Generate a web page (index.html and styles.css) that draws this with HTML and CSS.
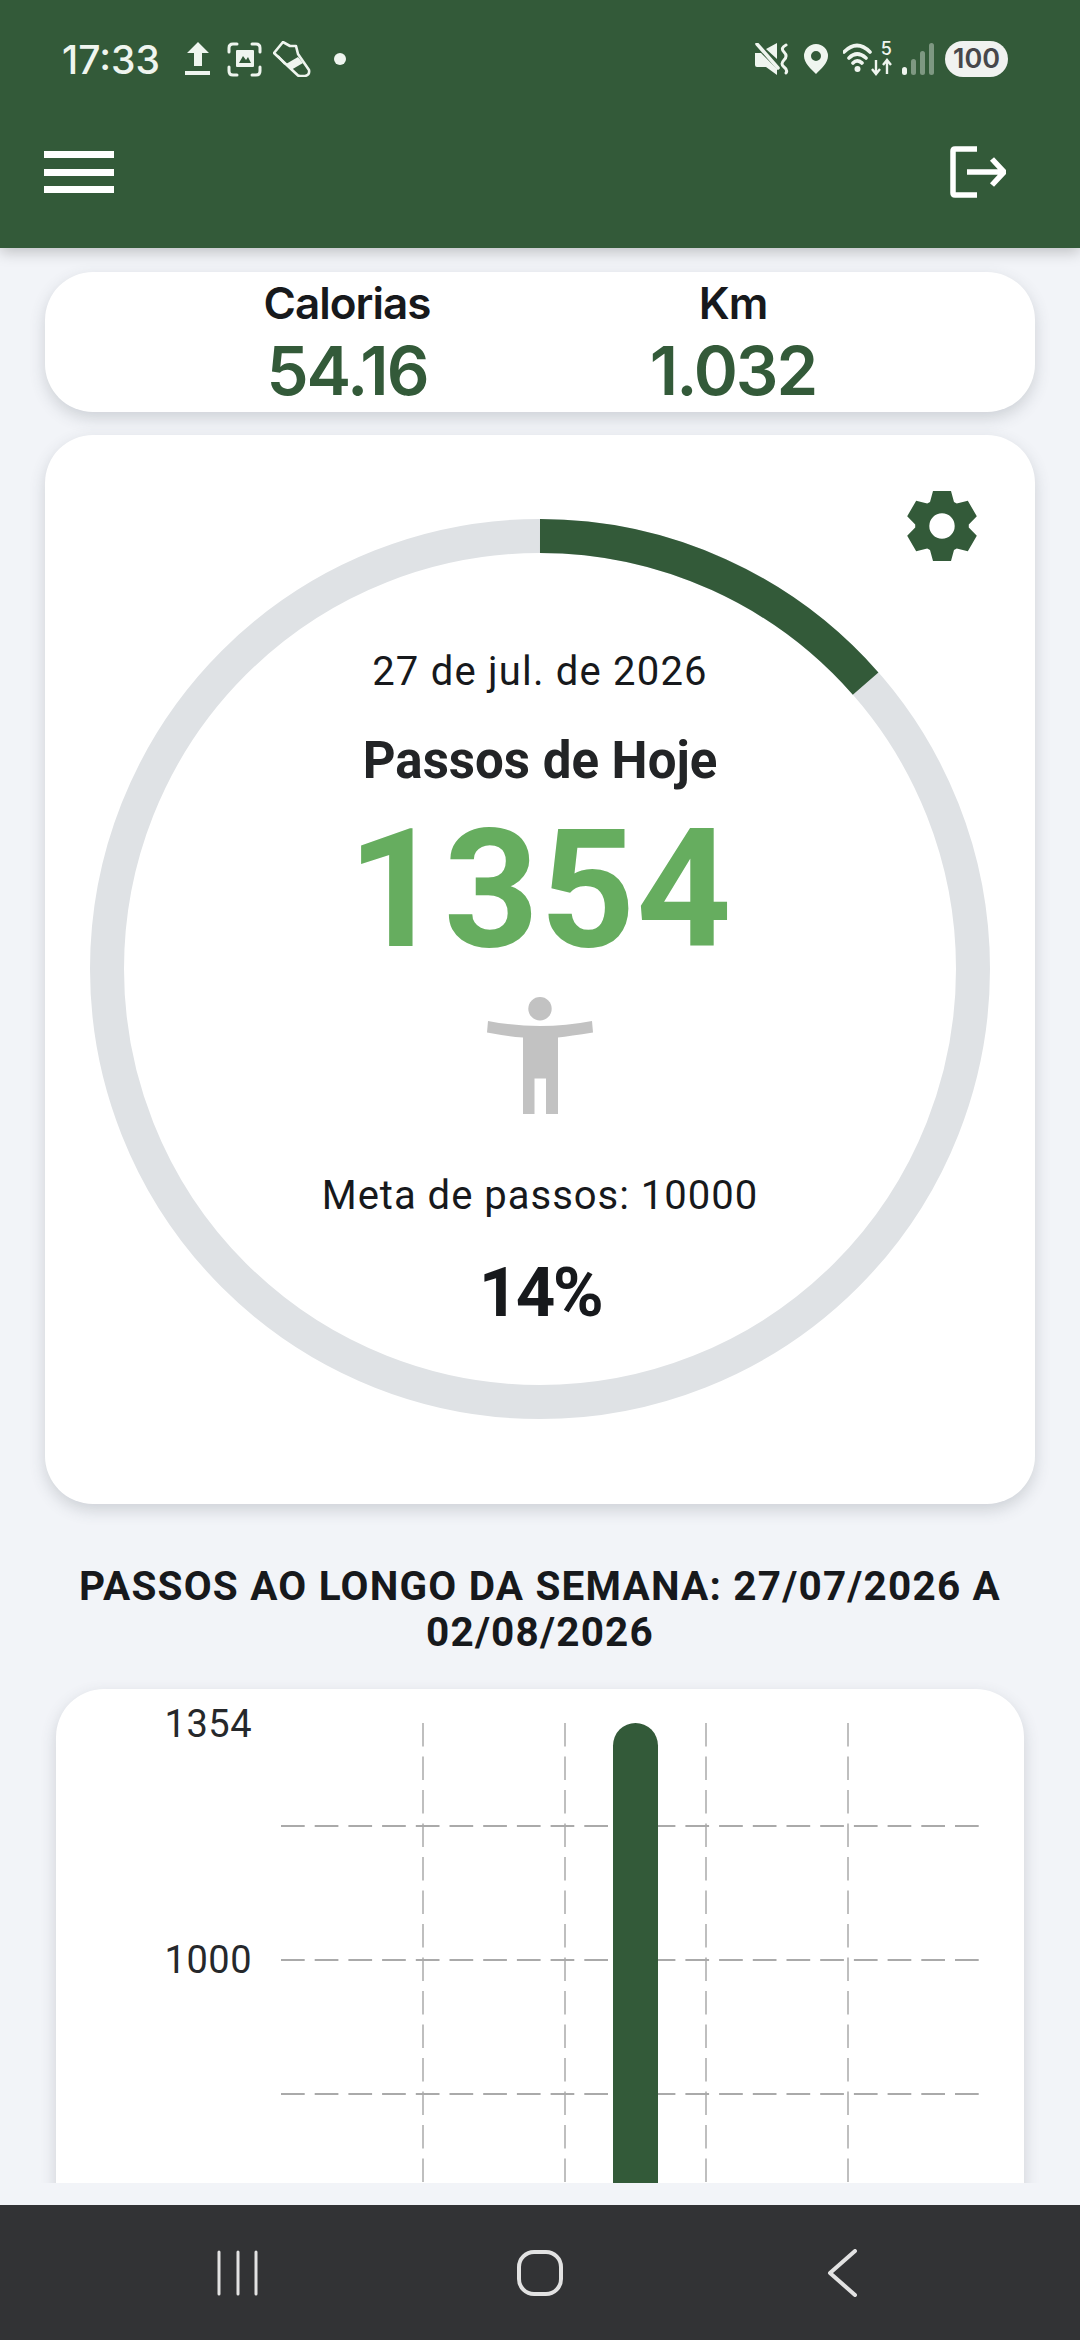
FILE: index.html
```html
<!DOCTYPE html>
<html lang="pt-BR">
<head>
    <meta charset="UTF-8">
    <meta name="viewport" content="width=device-width, initial-scale=1.0">
    <title>Passos de Hoje</title>
    <link rel="stylesheet" href="styles.css">
</head>
<body>
    <header class="app-header">
        <div class="status-bar">
            <span class="status-time">17:33</span>
            <svg class="ic-upload" width="26" height="34" viewBox="0 0 26 34"><path d="M13 0 24 11H17V24H9V11H2Z M0 29H25V33H0Z" fill="#eff5ef"/></svg>
            <svg class="ic-frame" width="35" height="35" viewBox="0 0 35 35" fill="none">
                <path d="M2 10V6Q2 2 6 2H10M25 2H29Q33 2 33 6V10M33 25V29Q33 33 29 33H25M10 33H6Q2 33 2 29V25" stroke="#eff5ef" stroke-width="3" stroke-linecap="round"/>
                <path fill-rule="evenodd" d="M10 8H26Q27 8 27 9V24Q27 25 26 25H10Q9 25 9 24V9Q9 8 10 8ZM12 21H24L21 15 19 18 16 14Z" fill="#eff5ef"/>
            </svg>
            <svg class="ic-shoe" width="38" height="36" viewBox="0 0 38 36" fill="none">
                <path d="M1 12 10 1 17 5 23 5 25 13 36 29Q37 34 32 35 28 35.500 25 34.500Z" stroke="#eff5ef" stroke-width="2.600" stroke-linejoin="round"/>
                <path d="M5 15 12 23" stroke="#eff5ef" stroke-width="2"/>
                <path d="M13 23 25 16 30 22 18 29Z" fill="#eff5ef"/>
            </svg>
            <span class="status-dot"></span>
            <span class="status-spacer"></span>
            <svg class="ic-mute" width="34" height="32" viewBox="0 0 34 32" fill="none">
                <path d="M0 10H6L22 26V32L11 24H2Q0 24 0 22ZM11 6 22 0V16Z" fill="#eff5ef"/>
                <path d="M2 1 23 25" stroke="#eff5ef" stroke-width="3.500" stroke-linecap="round"/>
                <path d="M31 2Q25 5 29 9T29 17 29 24 31 30" stroke="#eff5ef" stroke-width="3" stroke-linecap="round"/>
            </svg>
            <svg class="ic-pin" width="24" height="30" viewBox="0 0 24 30"><path fill-rule="evenodd" d="M12 0A12 12 0 0 1 24 12C24 19 17 25 12 30 7 25 0 19 0 12A12 12 0 0 1 12 0ZM12 7A5 5 0 1 0 12 17 5 5 0 0 0 12 7Z" fill="#eff5ef"/></svg>
            <span class="ic-wifi">
                <svg width="50" height="34" viewBox="0 0 50 34" fill="none">
                    <path d="M1 10Q14-3 27 10M6 16Q14 8 23 16M10 21Q14 17 19 21" stroke="#eff5ef" stroke-width="3.600" stroke-linecap="round"/>
                    <circle cx="14.500" cy="27" r="3" fill="#eff5ef"/>
                    <path d="M33 18V32M29 27 33 32 37 27M44 32V18M40 23 44 18 48 23" stroke="#eff5ef" stroke-width="2.400"/>
                </svg>
                <span class="wifi-five">5</span>
            </span>
            <span class="signal">
                <span class="signal-bar signal-on"></span>
                <span class="signal-bar signal-b2"></span>
                <span class="signal-bar signal-b3"></span>
                <span class="signal-bar signal-b4"></span>
            </span>
            <span class="battery">100</span>
        </div>
        <div class="toolbar">
            <button class="menu-button" aria-label="Menu">
                <span></span><span></span><span></span>
            </button>
            <svg class="ic-logout" width="56" height="52" viewBox="0 0 56 52" fill="none">
                <path d="M27 3H5Q3 3 3 5V47Q3 49 5 49H27" stroke="#fff" stroke-width="5.500"/>
                <path d="M17 26H52M42 13 54 26 42 39" stroke="#fff" stroke-width="5.500"/>
            </svg>
        </div>
    </header>

    <main class="content">
        <section class="card stats-card">
            <div class="stat">
                <div class="stat-label">Calorias</div>
                <div class="stat-value">54.16</div>
            </div>
            <div class="stat">
                <div class="stat-label">Km</div>
                <div class="stat-value">1.032</div>
            </div>
        </section>

        <section class="card today-card">
            <svg class="ic-gear" width="70" height="70" viewBox="-35 -35 70 70">
                <path fill-rule="evenodd" fill="#335a39" d="M-12-24-9-35 9-35 12-24 14.780-22.390 25.810-25.290 34.810-9.710 26.780-1.610 26.780 1.610 34.810 9.710 25.810 25.290 14.780 22.390 12 24 9 35-9 35-12 24-14.780 22.390-25.810 25.290-34.810 9.710-26.780 1.610-26.780-1.610-34.810-9.710-25.810-25.290-14.780-22.390ZM0-12.700A12.700 12.700 0 1 0 0 12.700 12.700 12.700 0 0 0 0-12.700Z"/>
            </svg>
            <div class="ring-wrap">
                <svg class="ring" width="900" height="900" viewBox="0 0 900 900" fill="none">
                    <circle cx="450" cy="450" r="433" stroke="#dfe2e5" stroke-width="34"/>
                    <path d="M450 17A433 433 0 0 1 775.600 164.600" stroke="#335a39" stroke-width="34"/>
                </svg>
                <div class="ring-text">
                    <div class="today-date">27 de jul. de 2026</div>
                    <h2 class="today-title">Passos de Hoje</h2>
                    <div class="today-steps">1354</div>
                    <svg class="ic-person" width="106" height="117" viewBox="187 37 106 117">
                        <circle cx="240" cy="48.700" r="11.700" fill="#c2c2c2"/>
                        <path d="M188 61Q240 71 292 61L293 72.500Q270 76 258 77.500V154H246V118.500H234.500V154H223V77.500Q205 76 187 72.500Z" fill="#c2c2c2"/>
                    </svg>
                    <div class="today-goal">Meta de passos: 10000</div>
                    <div class="today-percent">14%</div>
                </div>
            </div>
        </section>

        <h3 class="week-title">PASSOS AO LONGO DA SEMANA: 27/07/2026 A 02/08/2026</h3>

        <section class="card chart-card">
            <svg class="chart" width="968" height="600" viewBox="56 1689 968 600" fill="none">
                <text class="chart-label" x="252" y="1737">1354</text>
                <text class="chart-label" x="252" y="1973">1000</text>
                <g class="grid-h">
                    <path d="M281 1826H979M281 1960H979M281 2094H979"/>
                </g>
                <g class="grid-v">
                    <path d="M423 1723V2289M565 1723V2289M706 1723V2289M848 1723V2289"/>
                </g>
                <path d="M613 2289V1745.500A22.500 22.500 0 0 1 658 1745.500V2289Z" fill="#335a39"/>
            </svg>
        </section>
    </main>

    <nav class="nav-bar">
        <svg width="42" height="46" viewBox="0 0 42 46" fill="none"><path d="M2 2V44M21 2V44M39 2V44" stroke="#e2e2e2" stroke-width="3" stroke-linecap="round"/></svg>
        <svg width="46" height="46" viewBox="0 0 46 46" fill="none"><rect x="2" y="2" width="42" height="42" rx="15" stroke="#e2e2e2" stroke-width="4"/></svg>
        <svg width="30" height="48" viewBox="0 0 30 48" fill="none"><path d="M28 2 3 24 28 46" stroke="#e2e2e2" stroke-width="4" stroke-linecap="round" stroke-linejoin="round"/></svg>
    </nav>
</body>
</html>
```

FILE: styles.css
```css
:root {
    --green-dark: #335a39;
    --green-light: #66ad5f;
    --bg-page: #f2f4f8;
    --text-dark: #17191c;
    --status: #eff5ef;
}

* {
    margin: 0;
    padding: 0;
    box-sizing: border-box;
}

body {
    width: 1080px;
    height: 2340px;
    overflow: hidden;
    display: flex;
    flex-direction: column;
    background-color: var(--bg-page);
    color: var(--text-dark);
    font-family: Roboto, "Liberation Sans", sans-serif;
}

/* Barra superior */
.app-header {
    position: relative;
    z-index: 2;
    flex: 0 0 248px;
    background-color: var(--green-dark);
    box-shadow: 0 4px 14px rgba(0, 0, 0, 0.22);
}

.status-bar {
    display: flex;
    align-items: center;
    height: 36px;
    margin-top: 41px;
    padding: 0 72px 0 62px;
}

.status-time {
    width: 123px;
    font-family: Inter, sans-serif;
    font-size: 39px;
    font-weight: 500;
    color: var(--status);
}

.ic-frame {
    margin-left: 16px;
}

.ic-shoe {
    margin-left: 11px;
}

.status-dot {
    width: 12px;
    height: 12px;
    margin-left: 23px;
    border-radius: 50%;
    background-color: var(--status);
}

.status-spacer {
    flex: 1;
}

.ic-pin {
    margin-left: 15px;
}

.ic-wifi {
    position: relative;
    display: flex;
    margin-left: 15px;
}

.wifi-five {
    position: absolute;
    top: -4px;
    right: 1px;
    font-family: Inter, sans-serif;
    font-size: 18px;
    font-weight: 500;
    color: var(--status);
}

.signal {
    display: flex;
    align-items: flex-end;
    gap: 4px;
    height: 32px;
    margin-left: 9px;
}

.signal-bar {
    width: 5px;
    border-radius: 3px;
    background-color: rgba(239, 245, 239, 0.4);
}

.signal-on {
    height: 8px;
    background-color: var(--status);
}

.signal-b2 {
    height: 16px;
}

.signal-b3 {
    height: 24px;
}

.signal-b4 {
    height: 32px;
}

.battery {
    width: 63px;
    height: 36px;
    margin-left: 11px;
    border-radius: 18px;
    background-color: #f0f2f0;
    color: #47474b;
    font-family: Inter, sans-serif;
    font-size: 27px;
    font-weight: 600;
    line-height: 36px;
    text-align: center;
}

.toolbar {
    display: flex;
    justify-content: space-between;
    align-items: center;
    margin-top: 69px;
    padding: 0 74px 0 44px;
}

.menu-button {
    display: flex;
    flex-direction: column;
    gap: 10.5px;
    width: 70px;
    border: none;
    background: none;
}

.menu-button span {
    height: 7px;
    background-color: #fff;
}

/* Conteudo */
.content {
    flex: 1;
    min-height: 0;
    margin-bottom: 22px;
    overflow: hidden;
    padding-top: 24px;
}

.card {
    background-color: #fff;
    border-radius: 48px;
    box-shadow: 0 6px 16px rgba(60, 70, 80, 0.2);
}

.stats-card {
    display: grid;
    grid-template-columns: 386px 386px;
    justify-content: center;
    height: 140px;
    margin: 0 45px 23px;
    text-align: center;
}

.stat-label {
    margin-top: 5px;
    font-family: Inter, sans-serif;
    font-size: 44px;
    font-weight: 600;
    line-height: 52px;
    letter-spacing: -1px;
}

.stat-value {
    margin-top: 6px;
    font-family: Inter, sans-serif;
    font-size: 67px;
    font-weight: 600;
    line-height: 72px;
    letter-spacing: -2px;
    color: var(--green-dark);
}

.today-card {
    position: relative;
    height: 1069px;
    margin: 0 45px;
    padding-top: 84px;
}

.ic-gear {
    position: absolute;
    top: 56px;
    right: 58px;
}

.ring-wrap {
    display: grid;
    justify-content: center;
}

.ring,
.ring-text {
    grid-area: 1 / 1;
}

.ring-text {
    display: flex;
    flex-direction: column;
    align-items: center;
    padding-top: 131px;
}

.today-date {
    font-size: 40px;
    line-height: 44px;
    letter-spacing: 1.2px;
}

.today-title {
    margin-top: 39px;
    font-size: 51px;
    font-weight: 700;
    line-height: 56px;
    color: #222426;
}

.today-steps {
    margin-top: 16px;
    font-size: 166px;
    font-weight: 700;
    line-height: 170px;
    letter-spacing: 1px;
    color: var(--green-light);
}

.ic-person {
    margin-top: 22px;
}

.today-goal {
    margin-top: 60px;
    font-size: 40px;
    line-height: 44px;
    letter-spacing: 1px;
}

.today-percent {
    margin-top: 37px;
    font-size: 69px;
    font-weight: 700;
    line-height: 76px;
    letter-spacing: -2.5px;
}

.week-title {
    margin: 59px 50px 0;
    font-size: 40.5px;
    font-weight: 700;
    line-height: 46px;
    letter-spacing: 1.2px;
    text-align: center;
}

.chart-card {
    height: 600px;
    margin: 34px 56px 0;
    overflow: hidden;
}

.chart {
    display: block;
}

.chart-label {
    font-family: Roboto, sans-serif;
    font-size: 38px;
    fill: #26282b;
    text-anchor: end;
    letter-spacing: 0.5px;
}

.grid-h path {
    stroke: #aaa;
    stroke-width: 2;
    stroke-dasharray: 23.7 10;
}

.grid-v path {
    stroke: #aaa;
    stroke-width: 1.5;
    stroke-dasharray: 23.5 10;
}

/* Barra de navegacao */
.nav-bar {
    flex: 0 0 135px;
    display: grid;
    grid-template-columns: repeat(3, 302px);
    justify-content: center;
    justify-items: center;
    align-items: center;
    background-color: #323335;
}
```
